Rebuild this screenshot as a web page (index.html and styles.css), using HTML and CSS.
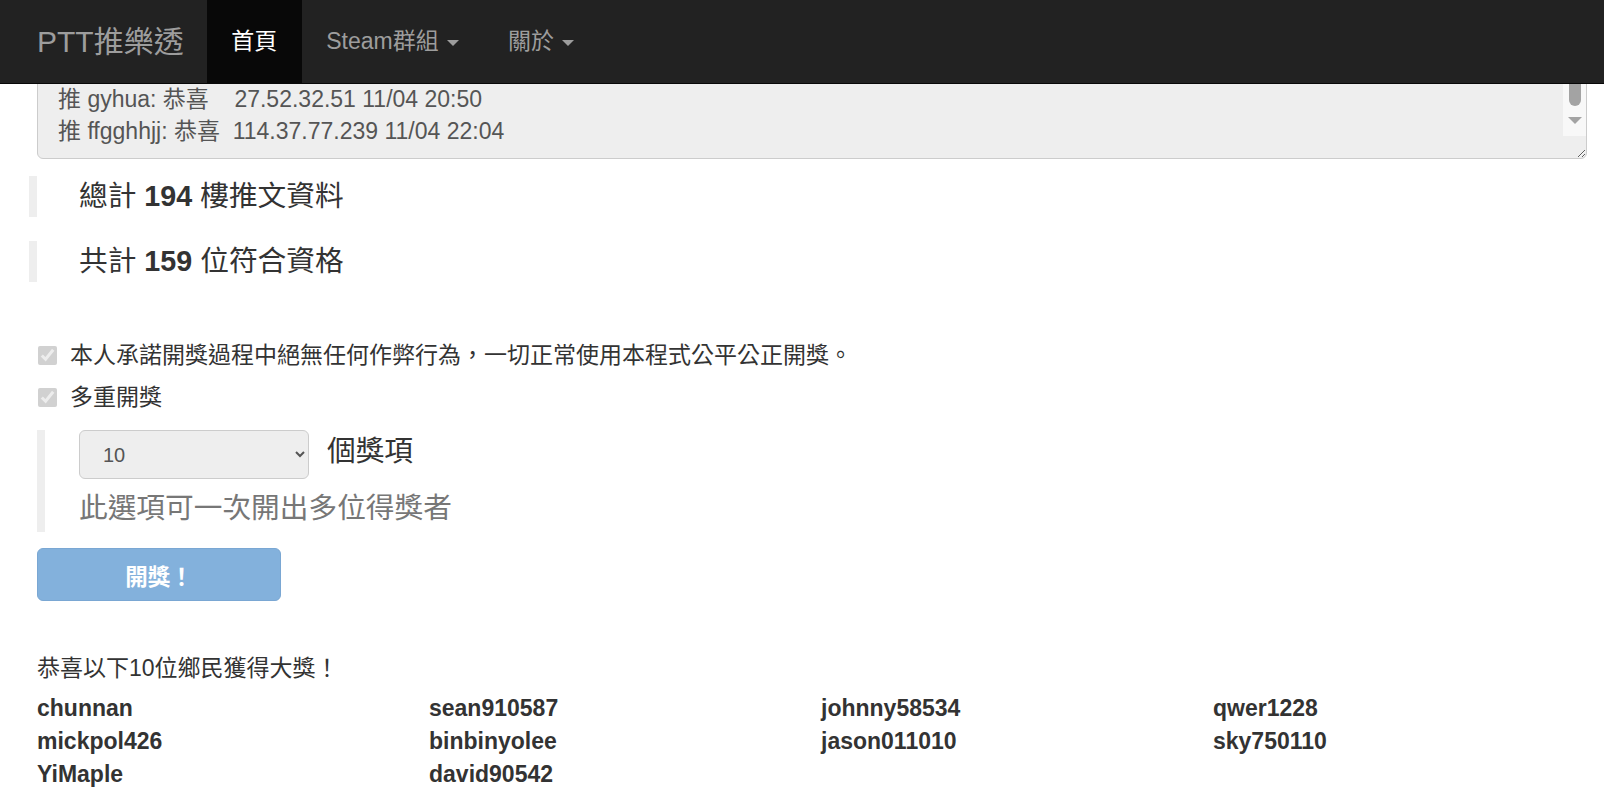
FILE: index.html
```html
<!DOCTYPE html>
<html lang="zh-Hant">
<head>
    <meta charset="UTF-8">
    <meta name="viewport" content="width=device-width, initial-scale=1.0">
    <title>PTT推樂透</title>
    <link rel="stylesheet" href="styles.css">
</head>
<body>
    <nav class="navbar">
        <a class="brand" href="#">PTT推樂透</a>
        <ul class="nav">
            <li class="active"><a href="#">首頁</a></li>
            <li><a href="#">Steam群組 <span class="caret"></span></a></li>
            <li><a href="#">關於 <span class="caret"></span></a></li>
        </ul>
    </nav>

    <div class="main">
        <!-- 推文清單 -->
        <div class="push-box">
            <textarea class="pushes" readonly>推 kevin1234: 恭喜  36.226.10.88 11/04 18:12
推 rainbow77: 恭喜  1.160.22.131 11/04 18:40
推 ccwang: 恭喜    61.224.5.17 11/04 19:02
推 ponyo520: 恭喜  42.73.119.204 11/04 19:31
推 leo0918: 恭喜   223.137.8.66 11/04 20:05
推 gyhua: 恭喜    27.52.32.51 11/04 20:50
推 ffgghhjj: 恭喜  114.37.77.239 11/04 22:04</textarea>
            <div class="scrollbar">
                <span class="thumb"></span>
                <span class="arrow"></span>
            </div>
        </div>

        <div class="stat">總計 <b>194</b> 樓推文資料</div>
        <div class="stat second">共計 <b>159</b> 位符合資格</div>

        <!-- 開獎設定 -->
        <div class="options">
            <label class="checkbox"><input type="checkbox" checked disabled> 本人承諾開獎過程中絕無任何作弊行為，一切正常使用本程式公平公正開獎。</label>
            <label class="checkbox"><input type="checkbox" checked disabled> 多重開獎</label>

            <div class="multi">
                <div class="multi-row">
                    <select class="count" disabled>
                        <option>10</option>
                    </select>
                    <span class="unit">個獎項</span>
                </div>
                <p class="help">此選項可一次開出多位得獎者</p>
            </div>

            <button class="draw" disabled>開獎！</button>
        </div>

        <!-- 得獎名單 -->
        <p class="winners-title">恭喜以下10位鄉民獲得大獎！</p>
        <div class="winners">
            <b>chunnan</b>
            <b>sean910587</b>
            <b>johnny58534</b>
            <b>qwer1228</b>
            <b>mickpol426</b>
            <b>binbinyolee</b>
            <b>jason011010</b>
            <b>sky750110</b>
            <b>YiMaple</b>
            <b>david90542</b>
        </div>
    </div>

    <script src="script.js"></script>
</body>
</html>
```

FILE: styles.css
```css
body {
    margin: 0;
    font-family: "Liberation Sans", "Noto Sans CJK TC", sans-serif;
    font-size: 23px;
    line-height: 33px;
    color: #333;
    background-color: #fff;
}

.navbar {
    position: fixed;
    top: 0;
    left: 0;
    right: 0;
    z-index: 10;
    display: flex;
    height: 83px;
    background-color: #222;
    border-bottom: 1px solid #080808;
}

.brand {
    padding: 0 23px 0 37px;
    line-height: 83px;
    font-size: 30px;
    color: #9d9d9d;
    text-decoration: none;
}

.nav {
    display: flex;
    margin: 0;
    padding: 0;
    list-style: none;
}

.nav a {
    display: block;
    padding: 0 24.5px;
    line-height: 83px;
    color: #9d9d9d;
    text-decoration: none;
}

.nav .active a {
    color: #fff;
    background-color: #080808;
    height: 84px;
}

.caret {
    display: inline-block;
    width: 0;
    height: 0;
    margin-left: 2px;
    vertical-align: middle;
    border-top: 6.5px solid;
    border-left: 6.5px solid transparent;
    border-right: 6.5px solid transparent;
}

.main {
    padding: 16px 17px 40px 37px;
}

.push-box {
    position: relative;
}

.pushes {
    display: block;
    box-sizing: border-box;
    width: 100%;
    height: 143px;
    margin: 0;
    padding: 10px 44px 11px 20px;
    font-family: inherit;
    font-size: 23px;
    line-height: 32px;
    color: #555;
    background-color: #eee;
    border: 1px solid #ccc;
    border-radius: 6px;
    white-space: pre;
    overflow: hidden;
}

/* 捲軸 (畫在 textarea 上面) */
.scrollbar {
    position: absolute;
    top: 1px;
    right: 1px;
    bottom: 23px;
    width: 23px;
    display: flex;
    flex-direction: column;
    justify-content: flex-end;
    align-items: center;
    background-color: #f8f8f8;
    border-top-right-radius: 5px;
}

.thumb {
    width: 12px;
    height: 60px;
    background-color: #a3a3a3;
    border-radius: 6px;
}

.arrow {
    width: 0;
    height: 0;
    margin: 11px 0 12px;
    border-top: 7px solid #a3a3a3;
    border-left: 7.5px solid transparent;
    border-right: 7.5px solid transparent;
}

.stat {
    margin: 17px 0 0 -8px;
    padding-left: 42px;
    height: 41px;
    line-height: 41px;
    font-size: 28.7px;
    border-left: 8px solid #eee;
}

.stat.second {
    margin-top: 24px;
}

.options {
    margin-top: 57px;
}

.checkbox {
    display: flex;
    align-items: center;
    height: 33px;
    margin-bottom: 9px;
}

.checkbox input {
    width: 19px;
    height: 19px;
    margin: 0 13px 0 1px;
}

.multi {
    margin-top: 16px;
    padding: 0 0 3px 34px;
    border-left: 8px solid #eee;
}

.multi-row {
    display: flex;
    align-items: center;
}

.count {
    box-sizing: border-box;
    width: 230px;
    height: 49px;
    padding: 0 19px;
    font-family: inherit;
    font-size: 20px;
    color: #555;
    background-color: #eee;
    border: 1px solid #ccc;
    border-radius: 6px;
    opacity: 1;
}

.unit {
    margin: -6px 0 0 18px;
    font-size: 28.7px;
    line-height: 41px;
}

.help {
    margin: 9px 0 0;
    font-size: 28.7px;
    line-height: 41px;
    color: #777;
}

.draw {
    display: block;
    width: 244px;
    height: 53px;
    margin-top: 16px;
    font-family: inherit;
    font-size: 22.5px;
    font-weight: bold;
    color: #fff;
    background-color: #83b1dc;
    border: 1px solid #7aa7d3;
    border-radius: 6px;
}

.winners-title {
    margin: 51px 0 7px;
}

.winners {
    display: grid;
    grid-template-columns: repeat(4, 392px);
    line-height: 32.8px;
}
```

FILE: script.js
```js
const pushes = document.querySelector('.pushes');
pushes.scrollTop = pushes.scrollHeight;
```
